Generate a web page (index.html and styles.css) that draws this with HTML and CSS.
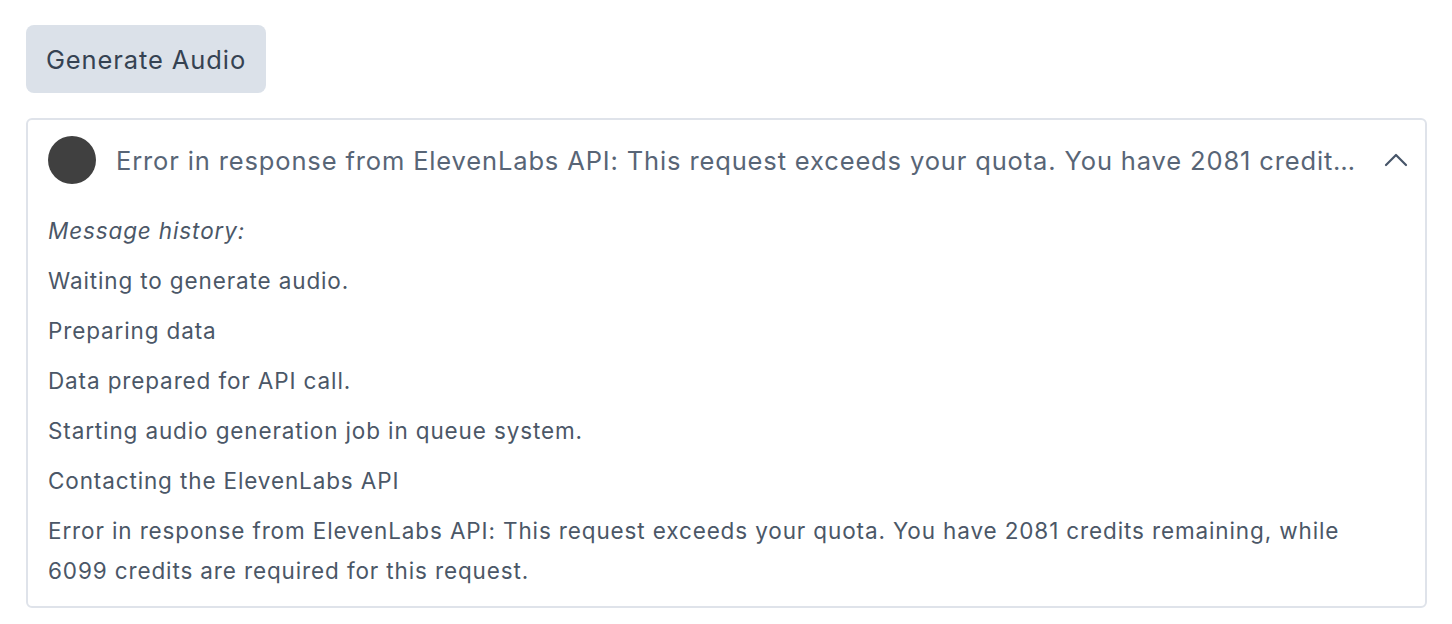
FILE: index.html
```html
<!DOCTYPE html>
<html>
<head>
<meta charset="utf-8">
<link rel="stylesheet" href="styles.css">
</head>
<body>
<div class="page">
  <button class="gen-btn">Generate Audio</button>
  <div class="panel">
    <div class="panel-head">
      <span class="dot"></span>
      <span class="head-text">Error in response from ElevenLabs API: This request exceeds your quota. You have 2081 credits remaining, while 6099 credits are required for this request.</span>
      <svg class="chev" width="24" height="14" viewBox="0 0 24 14"><path d="M2 12 L12 2 L22 12" fill="none" stroke="#475569" stroke-width="2.2" stroke-linecap="round" stroke-linejoin="round"/></svg>
    </div>
    <div class="panel-body">
      <p class="hist-title">Message history:</p>
      <p>Waiting to generate audio.</p>
      <p>Preparing data</p>
      <p>Data prepared for API call.</p>
      <p>Starting audio generation job in queue system.</p>
      <p>Contacting the ElevenLabs API</p>
      <p>Error in response from ElevenLabs API: This request exceeds your quota. You have 2081 credits remaining, while 6099 credits are required for this request.</p>
    </div>
  </div>
</div>
</body>
</html>
```
FILE: styles.css
```css
html, body { margin: 0; padding: 0; background: #fff; }
body { font-family: Inter, "Noto Sans", sans-serif; color: #4b5767; }
.page { padding: 25px 25px 0 26px; }
.gen-btn {
  display: block;
  width: 240px; height: 68px;
  background: #dbe1e9;
  border: none; border-radius: 8px;
  font-family: Inter, sans-serif; font-size: 25.5px; letter-spacing: 0.9px;
  color: #354252;
  padding: 0;
}
.panel {
  margin-top: 25px;
  border: 2px solid #dfe3ea;
  border-radius: 6px;
  padding: 0 18px 15px 20px;
}
.panel-head {
  display: flex; align-items: center;
  height: 80px;
  gap: 20px;
}
.dot { flex: none; width: 48px; height: 48px; border-radius: 50%; background: #404040; }
.head-text {
  flex: 1; min-width: 0;
  white-space: nowrap; overflow: hidden; text-overflow: ellipsis;
  font-size: 25.5px; letter-spacing: 0.86px; color: #586576;
}
.chev { flex: none; margin: 0 -1px 0 -1px; }
.panel-body { padding-top: 11px; padding-right: 4px; }
.panel-body p { margin: 0 0 10px 0; font-size: 22.5px; letter-spacing: 0.87px; line-height: 40px; color: #4b5767; }
.panel-body p:last-child { margin-bottom: 0; }
.hist-title { font-style: italic; }
```
